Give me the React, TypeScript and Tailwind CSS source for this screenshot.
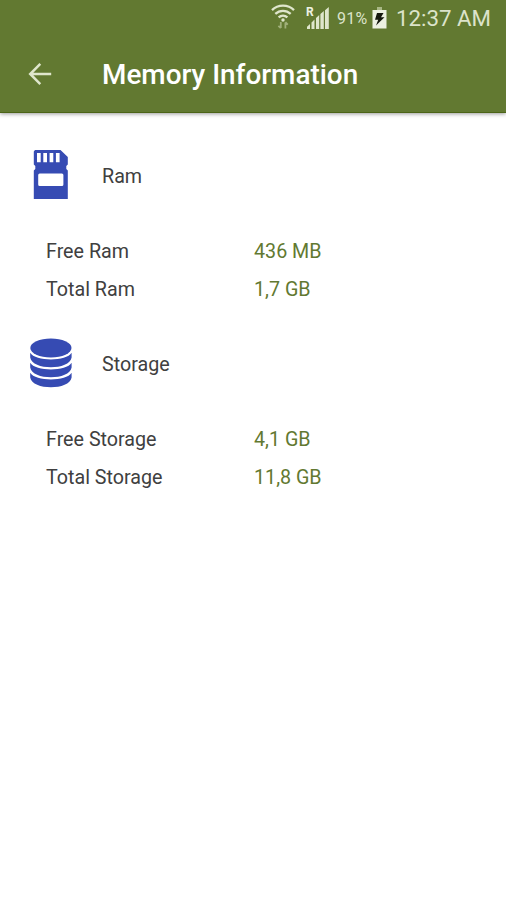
const WifiIcon = () => (
  <svg className="mt-1 h-[26px] w-6" viewBox="0 0 24 26" fill="none" stroke="#dfe6cc" strokeWidth="2.3">
    <path d="M1 6.1C7 .2 17 .2 23 6.1M4.3 9.9c4.4-4.1 11-4.1 15.4 0M7.6 13.4c2.6-2.3 6.2-2.3 8.8 0" />
    <circle cx="12" cy="16" r="1.7" fill="#dfe6cc" stroke="none" />
    <path d="M9.8 18v6M7.4 21.8l2.4 2.4M14.4 24.4v-6M16.8 20.6l-2.4-2.4" stroke="#a0b07a" strokeWidth="1.8" />
  </svg>
);

const SignalIcon = () => (
  <svg className="mt-1.5 ml-[11px] h-6 w-6" viewBox="0 0 24 24">
    <text x="0" y="9.5" fontFamily="Roboto, sans-serif" fontSize="12" fontWeight="700" fill="#eef2e2">R</text>
    <path d="M1 23v-2.2L4 18v5zM5.5 23v-6.5l3-3V23zM10 23V12l3.2-3v14zM14.4 23V8l3.4-3v18zM19 23V4.2L22.8 1v22z" fill="#dfe6cc" />
  </svg>
);

const BatteryIcon = () => (
  <svg className="mt-[7px] ml-1 h-[22px] w-[15px]" viewBox="0 0 15 22">
    <path d="M5 0h5v3H5z" fill="#a9b886" />
    <path d="M.5 3h14v18.5H.5z" fill="#edf1e2" />
    <path d="M5 6h6.5L9 10.2h3.5L4 18.5l2.2-5.7H3z" fill="#15180e" />
  </svg>
);

const SdIcon = () => (
  <svg className="h-[50px] w-[35px]" viewBox="0 0 35 50">
    <path
      fill="#364bb3"
      fillRule="evenodd"
      d="M2 0h25.5l7.3 7v7.5L33.3 16v3l1.5 1.5V49H.8V20.5L2.3 19v-3L.8 14.5V1.5zM4 3v9.3h3.7V3zM10.3 3v9.3H14V3zM16.6 3v9.3h3.7V3zM22.9 3v9.3h3.7V3zM6.7 23.5q-1.5 0-1.5 1.5v9.5q0 1.5 1.5 1.5h22.2q1.5 0 1.5-1.5V25q0-1.5-1.5-1.5z"
    />
  </svg>
);

const DatabaseIcon = () => (
  <svg className="h-[50px] w-[43px]" viewBox="0 0 43 50" fill="#364bb3">
    <ellipse cx="21.9" cy="10" rx="20.6" ry="9.4" />
    <path d="M1.2 14.8c5 8.8 36.4 8.8 41.4 0v4.7c-2 13-39.4 13-41.4 0z" />
    <path d="M1.2 24.8c5 8.8 36.4 8.8 41.4 0v4.7c-2 13-39.4 13-41.4 0z" />
    <path d="M1.2 34.8c5 8.8 36.4 8.8 41.4 0v4.7c-2 13-39.4 13-41.4 0z" />
  </svg>
);

const Row = ({ label, value }: { label: string; value: string }) => (
  <div className="flex h-[38px] items-center pl-[46px]">
    <span className="w-52">{label}</span>
    <span className="text-[#627931]">{value}</span>
  </div>
);

export default function App() {
  return (
    <div className="h-[900px] w-[506px] overflow-hidden bg-white font-[Roboto,sans-serif] text-[19.7px] leading-6 text-[#404040]">
      <header className="h-[113px] border-b border-[#4c6518] bg-[#627931] shadow-[0_1px_4px_rgba(0,0,0,0.4)]">
        <div className="flex h-[37px] items-start pl-[271px] text-[#dce3ca]">
          <WifiIcon />
          <SignalIcon />
          <span className="mt-[7px] ml-[7px] w-[31px] text-[16px] tracking-[0.3px] whitespace-nowrap">91%</span>
          <BatteryIcon />
          <span className="mt-1.5 ml-[9px] text-[22.3px] whitespace-nowrap">12:37 AM</span>
        </div>
        <div className="flex h-[75px] items-center">
          <svg className="mb-0.5 ml-7 h-6 w-6" viewBox="0 0 24 24" fill="none" stroke="#dfe6cc" strokeWidth="2.5">
            <path d="M23.2 12H2M12.3 1.9 2.2 12l10.1 10.1" />
          </svg>
          <h1 className="ml-[50px] text-[27.9px] font-medium text-white">Memory Information</h1>
        </div>
      </header>
      <main>
        <section className="pt-[37px]">
          <div className="flex h-[50px] items-center pl-[33px]">
            <SdIcon />
            <h2 className="mt-1 ml-[34px]">Ram</h2>
          </div>
          <div className="pt-[33px]">
            <Row label="Free Ram" value="436 MB" />
            <Row label="Total Ram" value="1,7 GB" />
          </div>
        </section>
        <section className="pt-[29px]">
          <div className="flex h-[50px] items-center pl-[29px]">
            <DatabaseIcon />
            <h2 className="mt-1 ml-[30px]">Storage</h2>
          </div>
          <div className="pt-[33px]">
            <Row label="Free Storage" value="4,1 GB" />
            <Row label="Total Storage" value="11,8 GB" />
          </div>
        </section>
      </main>
    </div>
  );
}
